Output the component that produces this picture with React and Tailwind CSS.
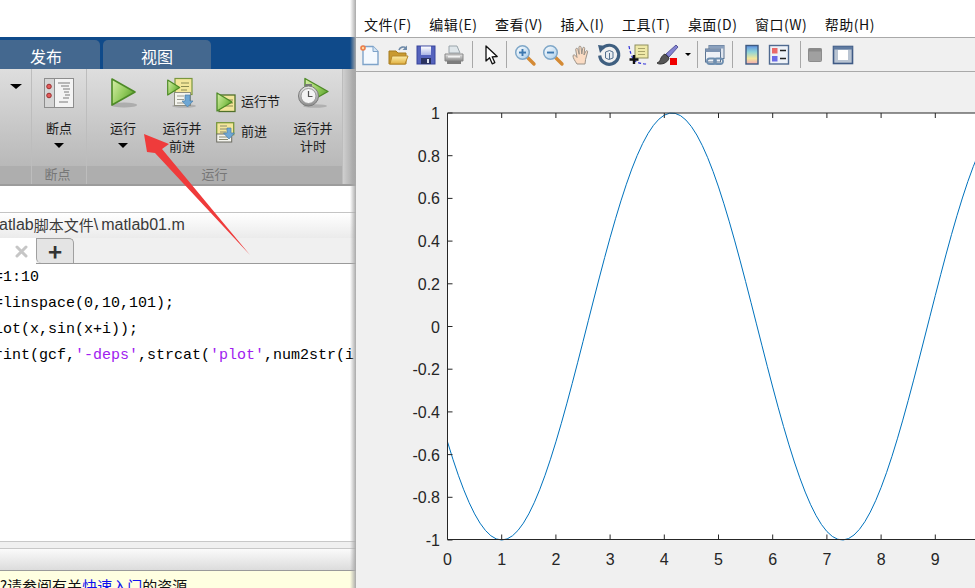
import React from 'react';

const menus = ['文件(F)', '编辑(E)', '查看(V)', '插入(I)', '工具(T)', '桌面(D)', '窗口(W)', '帮助(H)'];

const Icon = ({ size = 22, h, children }) => (
  <svg width={size} height={h || size} viewBox={`0 0 ${size} ${h || size}`} className="block flex-none overflow-visible">
    {children}
  </svg>
);

const Defs = () => (
  <svg width="0" height="0" className="absolute">
    <defs>
      <linearGradient id="play" x1="0" y1="0" x2="1" y2="0.6">
        <stop offset="0" stopColor="#d9efaa" />
        <stop offset="0.6" stopColor="#93cb5d" />
        <stop offset="1" stopColor="#5ea32f" />
      </linearGradient>
      <linearGradient id="folder" x1="0" y1="0" x2="0" y2="1">
        <stop offset="0" stopColor="#fdeeaa" />
        <stop offset="1" stopColor="#e0b040" />
      </linearGradient>
      <linearGradient id="bar" x1="0" y1="0" x2="0" y2="1">
        <stop offset="0" stopColor="#5d8fe0" />
        <stop offset="0.35" stopColor="#8fd4d8" />
        <stop offset="0.7" stopColor="#f3e79a" />
        <stop offset="1" stopColor="#f0a8b4" />
      </linearGradient>
      <linearGradient id="lens" x1="0" y1="0" x2="1" y2="1">
        <stop offset="0" stopColor="#ffffff" />
        <stop offset="1" stopColor="#a9cdea" />
      </linearGradient>
      <linearGradient id="steel" x1="0" y1="0" x2="0" y2="1">
        <stop offset="0" stopColor="#e8e8e8" />
        <stop offset="1" stopColor="#8a8a8a" />
      </linearGradient>
      <linearGradient id="disk" x1="0" y1="0" x2="0" y2="1">
        <stop offset="0" stopColor="#ffffff" />
        <stop offset="1" stopColor="#aab4e6" />
      </linearGradient>
    </defs>
  </svg>
);

const NewIcon = () => (
  <Icon>
    <path d="M4 2.500h10l5 5v13H4z" fill="#f4f9fe" stroke="#7ea3c9" strokeWidth="1.400" />
    <path d="M14 2.500v5h5" fill="#d5e5f4" stroke="#7ea3c9" />
    <circle cx="4" cy="4" r="2.800" fill="#ee7d4a" />
    <circle cx="4" cy="4" r="1.200" fill="#f9d9a0" />
  </Icon>
);

const OpenIcon = () => (
  <Icon>
    <path d="M2 7h7l2 2h8v11H2z" fill="#c99a30" stroke="#a67c20" />
    <path d="M3 20l2-8h16l-3 8z" fill="url(#folder)" stroke="#b8892a" />
    <path d="M12 6c1-3 5-4 7-2" fill="none" stroke="#6f8aa8" strokeWidth="1.600" />
    <path d="M20 1.500v4.500h-4.500z" fill="#6f8aa8" />
  </Icon>
);

const SaveIcon = () => (
  <Icon>
    <rect x="2" y="2" width="18" height="18" fill="#5563bd" stroke="#39449a" />
    <rect x="6" y="2.500" width="10" height="8.500" fill="url(#disk)" />
    <rect x="6" y="14" width="10" height="6" fill="#2a3260" />
    <rect x="12" y="15" width="2" height="4" fill="#dfe3f0" />
  </Icon>
);

const PrintIcon = () => (
  <Icon>
    <path d="M6 2h8l3 7H6z" fill="#dfe6ea" stroke="#9aa4aa" />
    <path d="M2 10h18v7H2z" fill="url(#steel)" stroke="#888" />
    <path d="M4 17h14v3H4z" fill="#7c7c7c" />
    <rect x="5" y="12" width="12" height="1.500" fill="#f2f2f2" />
  </Icon>
);

const PointerIcon = () => (
  <Icon>
    <path d="M6 2l0 15 3.600-3.200 2.600 6 2.600-1.200-2.600-5.800 5-.3z" fill="#fff" stroke="#111" strokeWidth="1.300" strokeLinejoin="round" />
  </Icon>
);

const ZoomIcon = ({ plus }) => (
  <Icon>
    <path d="M13 13l7 7" stroke="#d48a35" strokeWidth="3.400" strokeLinecap="round" />
    <circle cx="8.500" cy="8.500" r="6.800" fill="url(#lens)" stroke="#7fa7c8" strokeWidth="1.500" />
    <rect x="5" y="7.600" width="7" height="1.900" fill="#3d78b0" />
    {plus && <rect x="7.550" y="5" width="1.900" height="7" fill="#3d78b0" />}
  </Icon>
);

const HandIcon = () => (
  <Icon>
    <path
      transform="translate(2 0)"
      d="M5 20c-2-3-4-6-4-8 0-1.400 1.500-1.500 2.500-.3l1.500 1.800-1.300-8c0-1.500 1.800-1.600 2.200-.2l1.300 5-.3-7c0-1.500 2-1.500 2.200 0l.7 6.700.9-5.800c.3-1.400 2.100-1.100 2 .3l-.7 6.500 1.800-3.700c.6-1.200 2.200-.6 1.800.6l-2 7.400-.6 4.700z"
      fill="#fbdcc4"
      stroke="#9a9288"
      strokeWidth="1"
      strokeLinejoin="round"
    />
  </Icon>
);

const RotateIcon = () => (
  <Icon>
    <path d="M4 4.500a9.500 9.500 0 1 1-2.300 7" fill="none" stroke="#3f5f80" strokeWidth="3.200" />
    <path d="M0 1l8 1-6 7z" fill="#3f5f80" />
    <path d="M7.500 8l4-1.500 3.500 1.500v6l-4 1.500L7.500 14z" fill="#e8edf2" stroke="#54708e" />
    <path d="M11.500 9v6" stroke="#54708e" />
  </Icon>
);

const DataTipIcon = () => (
  <Icon>
    <path d="M1 2c1 6 3 12 6 15 3 2 7 3 12 3" fill="none" stroke="#2f2fd8" strokeWidth="1.200" strokeDasharray="3 2" />
    <rect x="7" y="1" width="13" height="13" fill="#efe9a8" stroke="#8f8f5f" />
    <path d="M10 4.500h7M10 7.500h7M10 10.500h7" stroke="#a9a46a" />
    <path d="M6 11v9M1.500 15.500h9" stroke="#111" strokeWidth="2.400" />
  </Icon>
);

const BrushIcon = () => (
  <Icon>
    <path d="M20 1l2 2-9 10-3-3z" fill="#8383d0" stroke="#57579a" />
    <path d="M9 10l4 4c-1 4-5 6-9 6-2 0-3-1-3-1 3-1 3-3 4-5 1-2 2-3 4-4z" fill="#555" stroke="#333" />
    <rect x="14" y="14" width="7" height="7" fill="#f00000" />
  </Icon>
);

const LinkIcon = () => (
  <Icon>
    <rect x="5" y="1.500" width="15" height="13" fill="#dfe5ee" stroke="#5c7492" />
    <rect x="5" y="1.500" width="15" height="3" fill="#8aa0bd" />
    <rect x="1.500" y="5" width="15" height="13" fill="#eef1f6" stroke="#5c7492" />
    <rect x="1.500" y="5" width="15" height="3" fill="#7d93b1" />
    <rect x="3" y="14.500" width="9" height="5.500" rx="2.700" fill="none" stroke="#6f8fb0" strokeWidth="1.800" />
    <rect x="10" y="14.500" width="9" height="5.500" rx="2.700" fill="none" stroke="#6f8fb0" strokeWidth="1.800" />
  </Icon>
);

const ColorbarIcon = () => (
  <Icon>
    <rect x="5" y="1.500" width="12" height="18.500" fill="url(#bar)" stroke="#3e5a82" strokeWidth="1.400" />
  </Icon>
);

const LegendIcon = () => (
  <Icon>
    <rect x="1.500" y="1.500" width="19" height="18.500" fill="#eef2f8" stroke="#4f6a90" strokeWidth="1.400" />
    <rect x="4" y="4" width="5.500" height="5.500" fill="#ea6a6a" />
    <rect x="4" y="12" width="5.500" height="5.500" fill="#6a6ae6" />
    <path d="M12 6.500h6M12 14.500h6" stroke="#222" strokeWidth="1.500" />
  </Icon>
);

const GridIcon = () => (
  <Icon>
    <rect x="4.500" y="4.500" width="13" height="13" rx="1" fill="#a0a0a0" stroke="#8c8c8c" />
    <rect x="4.500" y="4.500" width="13" height="3" fill="#8a8a8a" />
  </Icon>
);

const PlotToolsIcon = () => (
  <Icon>
    <rect x="1.500" y="2.500" width="19" height="17" fill="#b9c4d2" stroke="#3f5a85" strokeWidth="1.600" />
    <rect x="1.500" y="2.500" width="19" height="3" fill="#5f7aa0" />
    <rect x="6" y="6" width="10" height="10" fill="#fff" />
  </Icon>
);

const Separator = ({ className }) => <div className={`w-px h-[27px] bg-[#a8a8a8] flex-none ${className}`} />;

const Cell = ({ children, className = '' }) => (
  <div className={`w-[28px] h-[33px] flex items-center justify-center flex-none ${className}`}>{children}</div>
);

const Caret = ({ className = 'border-x-[5px] border-t-[5px]' }) => (
  <div className={`w-0 h-0 border-x-transparent border-t-black ${className}`} />
);

const PlayShape = ({ x = 0, y = 0 }) => (
  <g transform={`translate(${x} ${y})`}>
    <ellipse cx="14" cy="27" rx="13" ry="2.500" fill="#8f8f8f" opacity="0.55" />
    <path d="M2 1l23 13L2 27z" fill="url(#play)" stroke="#4d8a26" strokeWidth="1.600" strokeLinejoin="round" />
  </g>
);

const BreakpointIcon = () => (
  <Icon size={30}>
    <rect x="0.500" y="0.500" width="29" height="29" fill="#f4f4f4" stroke="#8d8d8d" />
    <rect x="0.500" y="0.500" width="10" height="29" fill="#d5d5d5" stroke="#8d8d8d" />
    <circle cx="5" cy="8.500" r="2.300" fill="#e45a5a" stroke="#9a3030" />
    <circle cx="5" cy="17.500" r="2.300" fill="#e45a5a" stroke="#9a3030" />
    <path d="M14 5h12M17 8h8M19 11h7M20 14h5M21 17h5M19 20h6M15 24h9" stroke="#7b7b7b" />
  </Icon>
);

const DocArrow = ({ x, y, w = 17, h = 15 }) => (
  <g transform={`translate(${x} ${y})`}>
    <rect x="0.500" y="0.500" width={w} height={h} fill="#f4f4ee" stroke="#8e8e80" />
    <path d={`M3 4h${w - 9}M3 7.500h${w - 9}M3 11h${w - 9}`} stroke="#9a9a90" />
    <path d={`M${w - 5} 3h5v6h3l-5.500 6-5.500-6h3z`} fill="#6ea7d4" stroke="#4d7fa8" strokeWidth="0.700" />
  </g>
);

const RunAdvanceIcon = () => (
  <Icon size={30}>
    <ellipse cx="17" cy="28" rx="12" ry="1.800" fill="#8f8f8f" opacity="0.5" />
    <rect x="8" y="0.500" width="17" height="16" fill="#f3e69a" stroke="#79973e" strokeWidth="1.200" />
    <path d="M14 5h8M14 8.500h8M14 12h6" stroke="#8a8a50" />
    <path d="M0.700 2l12 7.500-12 7.500z" fill="url(#play)" stroke="#4d8a26" strokeWidth="1.200" strokeLinejoin="round" />
    <DocArrow x={7} y={14} w={16} h={13} />
  </Icon>
);

const RunSectionIcon = () => (
  <Icon size={20} h={21}>
    <rect x="3" y="3" width="16" height="16.500" fill="#f3e69a" stroke="#50702a" strokeWidth="1.300" />
    <path d="M10 8h7M9 11h8M8 14h9" stroke="#8a8a50" />
    <path d="M1 1l15 9-15 9z" fill="url(#play)" stroke="#4d8a26" strokeWidth="1.300" strokeLinejoin="round" />
  </Icon>
);

const AdvanceIcon = () => (
  <Icon size={20} h={21}>
    <rect x="0.700" y="0.700" width="17" height="12" fill="#f3e69a" stroke="#79973e" strokeWidth="1.300" />
    <rect x="0.700" y="12" width="15" height="8" fill="#f4f4ee" stroke="#6b6b60" />
    <path d="M4 4h7M4 7h7M4 10h6M3 15h9M3 17.500h9" stroke="#8a8a70" />
    <path d="M11 6h4v5h3.500L13 17l-5.500-6H11z" fill="#6ea7d4" stroke="#4d7fa8" strokeWidth="0.700" />
  </Icon>
);

const RunTimeIcon = () => (
  <Icon size={30}>
    <ellipse cx="17" cy="28" rx="12" ry="1.800" fill="#8f8f8f" opacity="0.5" />
    <path d="M7 0.500l23 13-23 13z" fill="url(#play)" stroke="#4d8a26" strokeWidth="1.400" strokeLinejoin="round" />
    <rect x="7" y="6" width="7" height="2" fill="#777" />
    <circle cx="10.500" cy="18" r="10" fill="url(#steel)" stroke="#7a7a7a" />
    <circle cx="10.500" cy="18" r="7.500" fill="#f4f4f4" stroke="#9a9a9a" />
    <path d="M10.500 13v5.500h4" fill="none" stroke="#555" strokeWidth="1.200" />
  </Icon>
);

const CloseMark = () => (
  <svg width="13" height="13" viewBox="0 0 13 13" className="block flex-none">
    <path d="M2 2l9 9M11 2l-9 9" stroke="#c6c6c6" strokeWidth="3" strokeLinecap="round" />
  </svg>
);

const RunCol = ({ icon, lines, caret, className }) => (
  <div className={`flex flex-col items-center pt-[9px] ${className}`}>
    <div className="h-[41px] flex justify-center">{icon}</div>
    {lines.map((line) => (
      <div key={line} className="h-[18px] leading-[18px]">{line}</div>
    ))}
    {caret && <Caret className="mt-[6px] border-x-[5px] border-t-[5px]" />}
  </div>
);

const Ribbon = () => (
  <div className="h-[115px] flex bg-gradient-to-b from-[#dedede] to-[#b2b2b2] text-[13px] text-[#1c1c1c]">
    <div className="w-[32px] flex flex-col border-r border-[#bdbdbd] flex-none">
      <div className="flex-1 pt-[15px] pl-[10px]">
        <Caret className="border-x-[6px] border-t-[5px]" />
      </div>
      <div className="h-[18px] bg-[#aeaeae]" />
    </div>
    <div className="w-[55px] flex flex-col border-r border-[#bdbdbd] flex-none">
      <div className="flex-1">
        <RunCol icon={<BreakpointIcon />} lines={['断点']} caret />
      </div>
      <div className="h-[18px] pr-[3px] bg-[#aeaeae] text-center text-[#777] leading-[15px]">断点</div>
    </div>
    <div className="w-[256px] flex flex-col border-r border-[#bdbdbd] flex-none">
      <div className="flex flex-1">
        <RunCol
          className="w-[72px] flex-none"
          caret
          lines={['运行']}
          icon={
            <Icon size={28} h={32}>
              <PlayShape x={1} />
            </Icon>
          }
        />
        <RunCol className="w-[46px] flex-none" lines={['运行并', '前进']} icon={<RunAdvanceIcon />} />
        <div className="w-[82px] pl-[11px] pt-[23px] flex-none flex flex-col gap-[9px]">
          <div className="flex items-center gap-[5px] h-[21px]">
            <RunSectionIcon />
            <span className="pb-[4px]">运行节</span>
          </div>
          <div className="flex items-center gap-[5px] h-[21px]">
            <AdvanceIcon />
            <span className="pb-[4px]">前进</span>
          </div>
        </div>
        <RunCol className="w-[52px] flex-none" lines={['运行并', '计时']} icon={<RunTimeIcon />} />
      </div>
      <div className="h-[18px] bg-[#aeaeae] text-center text-[#777] leading-[15px]">运行</div>
    </div>
    <div className="flex-1 bg-gradient-to-r from-[#cfcfcf] to-[#a4a4a4]" />
  </div>
);

const Editor = () => (
  <div className="relative w-[356px] h-full flex-none flex flex-col overflow-hidden bg-white">
    <div className="h-[37px] flex-none" />
    <div className="h-[32px] flex-none flex items-end gap-[3px] bg-[#0f4a8a] text-white text-[16px]">
      <div className="w-[100px] h-[29px] pl-[30px] leading-[32px] bg-[#44688f] rounded-tr-[5px]">发布</div>
      <div className="w-[108px] h-[29px] text-center leading-[32px] bg-[#44688f] rounded-t-[5px]">视图</div>
    </div>
    <Ribbon />
    <div className="h-[2px] flex-none bg-[#9c9c9c]" />
    <div className="h-[26px] flex-none" />
    <div className="h-px flex-none bg-[#c4c4c4]" />
    <div className="h-[25px] flex-none -ml-[1px] pb-[1px] flex items-center whitespace-nowrap text-[16px] leading-none text-[#3a3a3a] bg-gradient-to-b from-[#ffffff] to-[#ebebeb] font-['Liberation_Sans','Noto_Sans_CJK_SC',sans-serif]">
      atlab<span className="text-[15px]">脚本文件</span><span className="mr-[3px]">\</span>matlab01.m
    </div>
    <div className="h-[26px] flex-none flex border-b border-[#9a9a9a] bg-[#f0f0f0]">
      <div className="w-[36px] h-[26px] bg-white flex items-center justify-end pr-[8px] flex-none">
        <CloseMark />
      </div>
      <div className="w-[38px] h-[25px] flex-none flex items-center justify-center text-[24px] leading-none font-bold text-[#333] bg-[#e4e4e4] border border-t-[#a0a0a0] border-r-[#a0a0a0] border-l-[#a0a0a0] border-b-0 rounded-tr-[5px] rounded-bl-[5px]">+</div>
    </div>
    <div className="flex-1 -ml-[15px] pt-px font-['Liberation_Mono',monospace] text-[15px] leading-[26px] whitespace-pre text-black">
      <div>i=1:10</div>
      <div>x=linspace(0,10,101);</div>
      <div>plot(x,sin(x+i));</div>
      <div>
        print(gcf,<span className="text-[#a020f0]">'-deps'</span>,strcat(<span className="text-[#a020f0]">'plot'</span>,num2str(i
      </div>
    </div>
    <div className="h-px flex-none bg-[#c8c8c8]" />
    <div className="h-[6px] flex-none bg-[#f0f0f0]" />
    <div className="h-px flex-none bg-[#c8c8c8]" />
    <div className="h-[21px] flex-none bg-gradient-to-b from-[#fbfbfb] to-[#dcdcdc]" />
    <div className="h-px flex-none bg-[#9a9a9a]" />
    <div className="flex-1 min-h-[17px] max-h-[17px] bg-[#ffffe1] text-[15px] leading-[20px] pt-[5px] whitespace-nowrap text-[#111] overflow-hidden">
      ?请参阅有关<span className="text-[#1010ee]">快速入门</span>的资源
    </div>
    <div className="absolute inset-y-0 right-0 w-[6px] bg-gradient-to-r from-transparent to-[#a9a9a9]" />
  </div>
);

const X0 = 447.5;
const XSTEP = 54.2;
const YMID = 326.5;
const YAMP = 213.5;
const toX = (v) => X0 + XSTEP * v;
const toY = (v) => YMID - YAMP * v;

const curve = Array.from({ length: 101 }, (_, i) => {
  const x = i / 10;
  return `${toX(x).toFixed(2)},${toY(Math.sin(x - 1 - Math.PI / 2)).toFixed(2)}`;
}).join(' ');

const yTicks = [1, 0.8, 0.6, 0.4, 0.2, 0, -0.2, -0.4, -0.6, -0.8, -1];
const xTicks = [0, 1, 2, 3, 4, 5, 6, 7, 8, 9];

const Plot = () => (
  <svg width="619" height="516" viewBox="356 72 619 516" className="block font-['Liberation_Sans',sans-serif]">
    <rect x={X0} y="113" width="540" height={427} fill="#fff" />
    <polyline points={curve} fill="none" stroke="#0072bd" strokeWidth="1" />
    <path d={`M${X0} 113H975M${X0} 113V539.5H975`} fill="none" stroke="#262626" />
    {xTicks.map((t) => (
      <g key={t}>
        <path d={`M${toX(t).toFixed(1)} 113v5M${toX(t).toFixed(1)} 539.5v-5`} stroke="#262626" />
        <text x={toX(t)} y="565" textAnchor="middle" fontSize="16" fill="#262626">{t}</text>
      </g>
    ))}
    {yTicks.map((t) => (
      <g key={t}>
        <path d={`M${X0} ${toY(t).toFixed(1)}h5`} stroke="#262626" />
        <text x="440" y={toY(t) + 6} textAnchor="end" fontSize="16" fill="#262626">{t}</text>
      </g>
    ))}
  </svg>
);

const Figure = () => (
  <div className="flex-1 h-full flex flex-col bg-[#f0f0f0]">
    <div className="h-[37px] flex-none bg-white flex items-center gap-[17.5px] pl-[8px] pt-[10px] text-[14px] tracking-[0.5px] leading-none text-[#111] whitespace-nowrap">
      {menus.map((m) => (
        <span key={m}>{m}</span>
      ))}
    </div>
    <div className="h-[35px] flex-none flex items-center border-y border-y-[#a9a9a9]">
      <Cell><NewIcon /></Cell>
      <Cell><OpenIcon /></Cell>
      <Cell><SaveIcon /></Cell>
      <Cell><PrintIcon /></Cell>
      <Separator className="ml-[4px]" />
      <Cell className="ml-[4px]"><PointerIcon /></Cell>
      <Separator className="ml-[1px]" />
      <Cell className="ml-[4px]"><ZoomIcon plus /></Cell>
      <Cell><ZoomIcon /></Cell>
      <Cell><HandIcon /></Cell>
      <Cell><RotateIcon /></Cell>
      <Cell className="ml-[2px]"><DataTipIcon /></Cell>
      <Cell><BrushIcon /></Cell>
      <Caret className="ml-[4px] border-x-[3px] border-t-[3px]" />
      <Separator className="ml-[6px]" />
      <Cell className="ml-[3px]"><LinkIcon /></Cell>
      <Separator className="ml-[3px]" />
      <Cell className="ml-[5px]"><ColorbarIcon /></Cell>
      <Cell className="-ml-[1px]"><LegendIcon /></Cell>
      <Separator className="ml-[7px]" />
      <Cell><GridIcon /></Cell>
      <Cell><PlotToolsIcon /></Cell>
    </div>
    <Plot />
  </div>
);

export default function App() {
  return (
    <div className="relative w-[975px] h-[588px] flex overflow-hidden bg-white font-['Noto_Sans_CJK_SC','Liberation_Sans',sans-serif]">
      <Defs />
      <Editor />
      <Figure />
      {/* red annotation arrow drawn on top of the screenshot */}
      <svg width="356" height="300" className="absolute left-0 top-0 pointer-events-none">
        <polygon points="144,134 169,144 162,149 250,255 155,153 147,152" fill="#ef3b3b" />
      </svg>
    </div>
  );
}
